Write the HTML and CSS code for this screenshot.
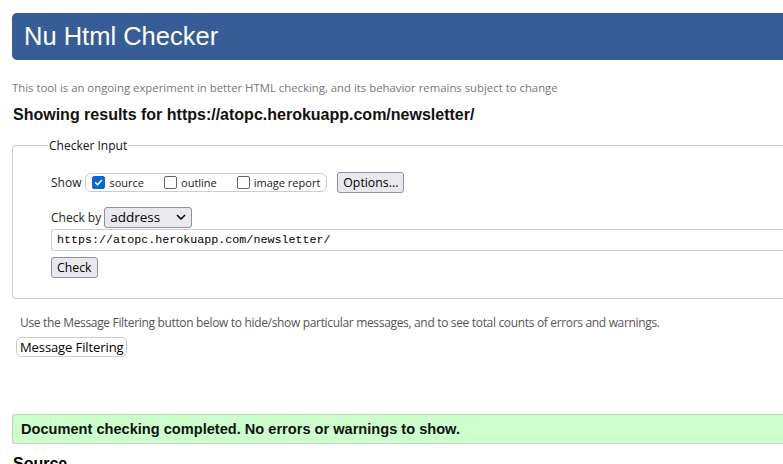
FILE: index.html
```html
<!DOCTYPE html>
<html>
<head>
<meta charset="utf-8">
<link rel="stylesheet" href="styles.css">
</head>
<body>
<div class="page">
  <header class="banner"><h1>Nu Html Checker</h1></header>
  <p class="tagline">This tool is an ongoing experiment in better HTML checking, and its behavior remains subject to change</p>
  <h2 class="results">Showing results for https://atopc.herokuapp.com/newsletter/</h2>
  <fieldset class="input-box">
    <legend>Checker Input</legend>
    <div class="row show-row">
      <span class="lbl">Show</span>
      <span class="pill">
        <label class="opt"><span class="cb checked"><svg viewBox="0 0 13 13" width="13" height="13"><path d="M3 6.8 L5.4 9.2 L10.2 3.8" fill="none" stroke="#fff" stroke-width="1.8" stroke-linecap="round" stroke-linejoin="round"/></svg></span>source</label>
        <label class="opt"><span class="cb"></span>outline</label>
        <label class="opt"><span class="cb"></span>image report</label>
      </span>
      <button class="btn options">Options...</button>
    </div>
    <div class="row by-row">
      <span class="lbl">Check by</span>
      <span class="select">address<svg viewBox="0 0 10 6" width="10" height="6"><path d="M1 1 L5 5 L9 1" fill="none" stroke="#000" stroke-width="1.5"/></svg></span>
    </div>
    <div class="url">https://atopc.herokuapp.com/newsletter/</div>
    <button class="btn check">Check</button>
  </fieldset>
  <p class="hint">Use the Message Filtering button below to hide/show particular messages, and to see total counts of errors and warnings.</p>
  <button class="filter">Message Filtering</button>
  <div class="success">Document checking completed. No errors or warnings to show.</div>
  <h2 class="source">Source</h2>
</div>
</body>
</html>
```
FILE: styles.css
```css
html, body { margin: 0; padding: 0; overflow: hidden; background: #fff; }
.page { width: 840px; padding: 13px 0 0 12px; font-family: "Liberation Sans", Arial, sans-serif; color: #000; }
.banner { background: #365d96; border-radius: 5px; height: 47px; display: flex; align-items: center; }
.banner h1 { margin: 1px 0 0 12px; font-weight: normal; color: #fff; font-size: 25.5px; line-height: 1; }
.tagline { margin: 20px 0 0 0; font-family: "Open Sans", sans-serif; font-size: 11.35px; color: #777; line-height: 15px; }
.results { margin: 10px 0 0 1px; font-size: 16px; font-weight: bold; line-height: 19px; color: #111; }
.input-box { margin: 13px 0 0 0; border: 1px solid #ccc; border-radius: 4px; padding: 17px 0 20px 38px; font-family: "Open Sans", sans-serif; font-size: 12px; }
.input-box legend { margin-left: -3px; padding: 0 1px; font-size: 12px; color: #111; }
.row { display: flex; align-items: center; }
.show-row { height: 22px; }
.lbl { color: #222; margin-right: 3px; font-size: 12px; }
.pill { display: flex; align-items: center; border: 1px solid #ccc; border-radius: 6px; height: 17px; padding: 0 6px 0 6px; margin-left: 1px; }
.opt { display: flex; align-items: center; margin-right: 20px; font-size: 11px; color: #222; }
.opt:last-child { margin-right: 0; }
.cb { width: 11px; height: 11px; border: 1px solid #666; border-radius: 2px; margin-right: 4px; display: inline-flex; background: #fff; }
.cb.checked { background: #0b65d8; border-color: #0b65d8; }
.cb.checked svg { width: 11px; height: 11px; }
.btn { font-family: "Open Sans", sans-serif; font-size: 12.3px; background: #e9e9ed; border: 1px solid #8f8f9d; border-radius: 3px; padding: 0 5px; color: #000; height: 21px; }
.options { margin-left: 10px; }
.by-row { margin-top: 13px; height: 22px; }
.select { display: flex; align-items: center; justify-content: space-between; width: 76px; height: 19px; padding: 0 5px 0 5px; border: 1px solid #8f8f9d; border-radius: 3px; background: #e9e9ed; font-size: 13.5px; color: #000; margin-left: 0; }
.url { margin-top: 1px; height: 20px; border: 1px solid #ccc; border-radius: 3px; border-right: none; font-family: "Liberation Mono", monospace; font-size: 11.7px; padding-left: 5px; line-height: 20px; color: #000; }
.check { margin-top: 6px; display: block; }
.hint { margin: 16px 0 0 8px; font-family: "Open Sans", sans-serif; font-size: 12px; color: #555; line-height: 15px; letter-spacing: -0.33px; }
.filter { margin: 7px 0 0 4px; display: block; font-family: "Open Sans", sans-serif; font-size: 13px; letter-spacing: -0.1px; background: #fff; border: 1px solid #ccc; border-radius: 5px; height: 20px; padding: 0 3px; color: #000; }
.success { margin-top: 57px; background: #ccffcc; border: 1px solid #ccc; border-radius: 3px; border-right: none; height: 28px; line-height: 28px; padding-left: 8px; font-weight: bold; font-size: 14.6px; color: #111; }
.source { margin: 11px 0 0 1px; font-size: 16px; font-weight: bold; }
```
